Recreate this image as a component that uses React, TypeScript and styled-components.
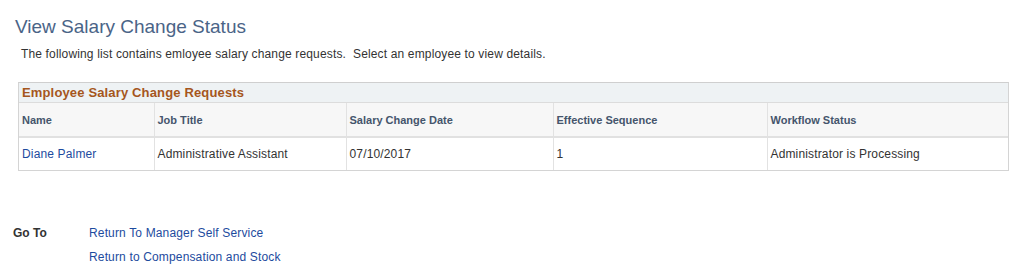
import { createGlobalStyle } from 'styled-components';
import styled from 'styled-components';

const GlobalStyle = createGlobalStyle`
  html, body {
    margin: 0;
    padding: 0;
    background: #ffffff;
    font-family: Arial, 'Liberation Sans', Helvetica, sans-serif;
    color: #333333;
  }
`;

interface Column {
  key: string;
  label: string;
  width: number;
}

const columns: Column[] = [
  { key: 'name', label: 'Name', width: 135 },
  { key: 'title', label: 'Job Title', width: 192 },
  { key: 'date', label: 'Salary Change Date', width: 207 },
  { key: 'seq', label: 'Effective Sequence', width: 214 },
  { key: 'status', label: 'Workflow Status', width: 241 },
];

const rows = [
  {
    name: 'Diane Palmer',
    title: 'Administrative Assistant',
    date: '07/10/2017',
    seq: '1',
    status: 'Administrator is Processing',
  },
];

const links = ['Return To Manager Self Service', 'Return to Compensation and Stock'];

export default function App() {
  return (
    <>
      <GlobalStyle />
      <Page>
        <Heading>View Salary Change Status</Heading>
        <Intro>
          The following list contains emloyee salary change requests.{'\u00a0 '}Select an
          employee to view details.
        </Intro>

        <Grid>
          <GridTitle>Employee Salary Change Requests</GridTitle>
          <Table>
            <colgroup>
              {columns.map((c) => (
                <col key={c.key} style={{ width: c.width }} />
              ))}
            </colgroup>
            <thead>
              <tr>
                {columns.map((c) => (
                  <HeadCell key={c.key}>{c.label}</HeadCell>
                ))}
              </tr>
            </thead>
            <tbody>
              {rows.map((r) => (
                <tr key={r.name}>
                  <BodyCell>
                    <CellLink href="#">{r.name}</CellLink>
                  </BodyCell>
                  <BodyCell>{r.title}</BodyCell>
                  <BodyCell>{r.date}</BodyCell>
                  <BodyCell>{r.seq}</BodyCell>
                  <BodyCell>{r.status}</BodyCell>
                </tr>
              ))}
            </tbody>
          </Table>
        </Grid>

        <GoTo>
          <GoToLabel>Go To</GoToLabel>
          <GoToLinks>
            {links.map((l) => (
              <NavLink key={l} href="#">
                {l}
              </NavLink>
            ))}
          </GoToLinks>
        </GoTo>
      </Page>
    </>
  );
}

const Page = styled.div`
  padding: 15px 0 0 0;
`;

const Heading = styled.h1`
  margin: 0 0 0 15px;
  font-size: 19px;
  font-weight: 400;
  line-height: 24px;
  color: #4a6487;
`;

const Intro = styled.p`
  margin: 7px 0 0 21px;
  font-size: 12px;
  letter-spacing: 0.15px;
  line-height: 16px;
  color: #333333;
`;

const Grid = styled.div`
  margin: 20px 13px 0 18px;
  width: 989px;
  border: 1px solid #d4d4d4;
  border-top-color: #cfcfcf;
`;

const GridTitle = styled.div`
  height: 19px;
  padding-left: 3px;
  background: #eef2f4;
  border-bottom: 1px solid #dcdcdc;
  font-size: 13px;
  font-weight: 700;
  letter-spacing: 0.15px;
  line-height: 20px;
  color: #a5561d;
`;

const Table = styled.table`
  width: 100%;
  border-collapse: collapse;
  table-layout: fixed;
`;

const HeadCell = styled.th`
  height: 33px;
  padding: 0 3px;
  background: #f7f7f7;
  border-left: 1px solid #e2e2e2;
  border-bottom: 2px solid #e1e1e1;
  text-align: left;
  font-size: 11px;
  font-weight: 700;
  color: #45556c;

  &:first-child {
    border-left: none;
  }
`;

const BodyCell = styled.td`
  height: 32px;
  padding: 0 3px;
  border-left: 1px solid #e2e2e2;
  font-size: 12px;
  letter-spacing: 0.15px;
  color: #333333;

  &:first-child {
    border-left: none;
  }
`;

const CellLink = styled.a`
  color: #1d4b9e;
  text-decoration: none;
`;

const GoTo = styled.div`
  display: flex;
  margin: 50px 0 0 13px;
`;

const GoToLabel = styled.div`
  width: 76px;
  font-size: 12px;
  font-weight: 700;
  line-height: 24px;
  color: #333333;
`;

const GoToLinks = styled.div`
  display: flex;
  flex-direction: column;
`;

const NavLink = styled.a`
  font-size: 12px;
  letter-spacing: 0.15px;
  line-height: 24px;
  color: #1d4b9e;
  text-decoration: none;
`;
